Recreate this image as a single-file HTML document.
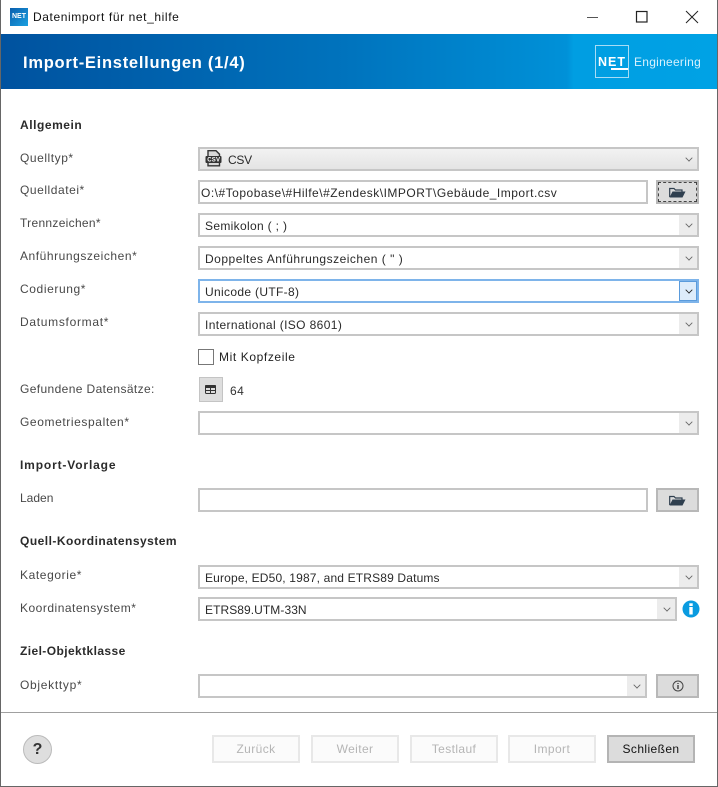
<!DOCTYPE html>
<html><head><meta charset="utf-8"><style>
html,body{margin:0;padding:0;width:718px;height:787px;overflow:hidden;background:#fff}
body{position:relative;font:12px "Liberation Sans",sans-serif;color:#222}
div,span,svg{position:absolute;box-sizing:border-box}
.t{white-space:nowrap;line-height:16px}
.l{left:20px;color:#484848}
.h{left:20px;font-weight:bold;color:#2b2b2b}
.f{left:198px;width:501px;height:24px;border:2px solid #c6c6c6;background:#fff;padding-left:5px;line-height:22px;white-space:nowrap;color:#2a2a2a}
.a{right:0;top:0;bottom:0;width:18px;background:#ececec}
.a:after{content:"";position:absolute;left:6.500px;top:6px;width:5px;height:5px;border-right:1.3px solid #666;border-bottom:1.3px solid #666;transform:rotate(45deg) scale(.85)}
.a.x:after{border-color:#222;border-width:1.800px;left:5.500px;top:5px}
.b{left:656px;width:43px;height:24px;background:#dcdcdc;border:2px solid #b8b8b8}
.n{top:735px;width:88px;height:28px;border:2px solid #e8e8e8;background:#fbfbfb;color:#b5b5b5;text-align:center;line-height:24px;letter-spacing:.4px}
</style></head><body>
<div style="left:0;top:0;width:1px;height:787px;background:#666"></div>
<div style="left:717px;top:0;width:1px;height:787px;background:#666"></div>
<div style="left:0;top:786px;width:718px;height:1px;background:#666"></div>
<div style="left:10px;top:8px;width:18px;height:18px;background:linear-gradient(135deg,#0a5fae,#1aa0e0);color:#fff;font:bold 7px/17px 'Liberation Sans',sans-serif;text-align:center">NET</div>
<div class="t" style="left:33px;top:9px;color:#111;letter-spacing:.6px">Datenimport für net_hilfe</div>
<svg style="left:585px;top:8px" width="125" height="18" fill="none" stroke="#222"><path d="M2 9.500H13" stroke="#555" stroke-width="1"/><rect x="51.500" y="3.500" width="10.500" height="10.500" stroke-width="1.200"/><path d="M101 3 113 15M113 3 101 15" stroke-width="1"/></svg>

<div style="left:1px;top:34px;width:716px;height:55px;background:linear-gradient(90deg,#00529f 0,#0073bd 48%,#0091d8 79%,#009ee2 80%,#00a2e5 100%)"></div>
<div class="t" style="left:23px;top:53px;color:#fff;font-size:16.500px;font-weight:bold;line-height:20px;letter-spacing:.73px">Import-Einstellungen (1/4)</div>
<div style="left:595px;top:45px;width:34px;height:33px;border:1px solid #a8dcf5"></div>
<div class="t" style="left:598px;top:54px;color:#fff;font-weight:bold;font-size:12.500px;letter-spacing:1px">NET</div>
<div style="left:611px;top:68px;width:17px;height:1.500px;background:#fff"></div>
<div class="t" style="left:634px;top:54px;color:#d6f1fd;font-size:12px;letter-spacing:.27px">Engineering</div>

<div class="t h" style="top:117px;letter-spacing:.55px">Allgemein</div>
<div class="t l" style="top:150px;letter-spacing:.55px">Quelltyp*</div>
<div class="f" style="top:147px;height:24px;background:linear-gradient(#f2f2f2,#e4e4e4);padding-left:28px;letter-spacing:-.3px"><svg style="left:5px;top:1px" width="18" height="18"><path d="M3 .7H11L14.500 4.200V15.800H3Z" fill="#d8d8d8" stroke="#333" stroke-width="1.400"/><rect x=".5" y="6" width="16" height="7" rx="1" fill="#333"/><text x="2.200" y="11.500" font-size="6" font-weight="bold" fill="#fff" font-family="Liberation Sans" textLength="12.500">CSV</text></svg>CSV<span class="a" style="background:none"></span></div>
<div class="t l" style="top:182px;letter-spacing:.55px">Quelldatei*</div>
<div class="f" style="top:180px;width:450px;padding-left:1px;letter-spacing:.5px">O:\#Topobase\#Hilfe\#Zendesk\IMPORT\Gebäude_Import.csv</div>
<div class="b" style="top:180px"><div style="left:0;top:0;right:0;bottom:0;border:1px dashed #444"></div><svg style="left:11px;top:5px" width="18" height="12"><path d="M.7 10V1.500H5L6.500 3H13V4.500" fill="none" stroke="#2f3f4f" stroke-width="1.200"/><path d="M.5 10.500 3.500 4.500H16.500L13.500 10.500Z" fill="#2f3f4f"/></svg></div>
<div class="t l" style="top:215px;letter-spacing:.3px">Trennzeichen*</div>
<div class="f" style="top:213px;letter-spacing:.33px">Semikolon ( ; )<span class="a"></span></div>
<div class="t l" style="top:248px;letter-spacing:.55px">Anführungszeichen*</div>
<div class="f" style="top:246px;letter-spacing:.5px">Doppeltes Anführungszeichen ( " )<span class="a"></span></div>
<div class="t l" style="top:281px;letter-spacing:.6px">Codierung*</div>
<div class="f" style="top:279px;border-color:#7eb4ea;letter-spacing:.33px">Unicode (UTF-8)<span class="a x" style="background:#ddecfb;border:1px solid #5a9bdc;width:18px;right:0"></span></div>
<div class="t l" style="top:314px;letter-spacing:.7px">Datumsformat*</div>
<div class="f" style="top:312px;letter-spacing:.38px">International (ISO 8601)<span class="a"></span></div>
<div style="left:198px;top:349px;width:16px;height:16px;border:1.500px solid #777;background:#fff"></div>
<div class="t" style="left:219px;top:349px;color:#222;letter-spacing:.6px">Mit Kopfzeile</div>
<div class="t l" style="top:381px;letter-spacing:.38px">Gefundene Datensätze:</div>
<div style="left:199px;top:377px;width:24px;height:25px;background:#dedede;border:1px solid #c4c4c4"></div>
<svg style="left:205px;top:385px" width="12" height="10"><rect x=".5" y=".5" width="10" height="8" rx="1" fill="none" stroke="#333"/><rect x="0" y="0" width="11" height="3" rx="1" fill="#333"/><path d="M5.500 3V9M0 5.500H11" stroke="#333"/></svg>
<div class="t" style="left:230px;top:383px;color:#333;letter-spacing:.4px">64</div>
<div class="t l" style="top:414px;letter-spacing:.6px">Geometriespalten*</div>
<div class="f" style="top:411px"><span class="a"></span></div>

<div class="t h" style="top:457px;letter-spacing:.85px">Import-Vorlage</div>
<div class="t l" style="top:490px">Laden</div>
<div class="f" style="top:488px;width:450px"></div>
<div class="b" style="top:488px"><svg style="left:11px;top:5px" width="18" height="12"><path d="M.7 10V1.500H5L6.500 3H13V4.500" fill="none" stroke="#2f3f4f" stroke-width="1.200"/><path d="M.5 10.500 3.500 4.500H16.500L13.500 10.500Z" fill="#2f3f4f"/></svg></div>

<div class="t h" style="top:533px;letter-spacing:.48px">Quell-Koordinatensystem</div>
<div class="t l" style="top:567px;letter-spacing:.6px">Kategorie*</div>
<div class="f" style="top:565px;letter-spacing:.16px">Europe, ED50, 1987, and ETRS89 Datums<span class="a"></span></div>
<div class="t l" style="top:600px;letter-spacing:.5px">Koordinatensystem*</div>
<div class="f" style="top:597px;width:479px;letter-spacing:.07px">ETRS89.UTM-33N<span class="a"></span></div>
<svg style="left:682px;top:600px" width="18" height="18"><circle cx="9" cy="9" r="8.500" fill="#0a9be0"/><rect x="7.300" y="3.300" width="3.400" height="2.700" fill="#fff"/><rect x="7.300" y="7" width="3.400" height="7.500" fill="#fff"/></svg>

<div class="t h" style="top:643px;letter-spacing:.41px">Ziel-Objektklasse</div>
<div class="t l" style="top:677px;letter-spacing:.7px">Objekttyp*</div>
<div class="f" style="top:674px;width:449px"><span class="a"></span></div>
<div class="b" style="top:674px"><svg style="left:13px;top:3px" width="14" height="14"><circle cx="7" cy="7" r="5" fill="none" stroke="#444"/><path d="M7 4V5M7 6V10" stroke="#333" stroke-width="1.300"/></svg></div>

<div style="left:1px;top:712px;width:716px;height:1px;background:#a0a0a0"></div>
<div style="left:23px;top:735px;width:29px;height:29px;border-radius:50%;background:#dedede;border:1px solid #bbb;text-align:center;font-weight:bold;font-size:16px;line-height:27px;color:#333">?</div>
<div class="n" style="left:212px">Zurück</div>
<div class="n" style="left:311px">Weiter</div>
<div class="n" style="left:410px">Testlauf</div>
<div class="n" style="left:508px">Import</div>
<div class="n" style="left:607px;background:#dcdcdc;border-color:#b4b4b4;color:#111">Schließen</div>
</body></html>
